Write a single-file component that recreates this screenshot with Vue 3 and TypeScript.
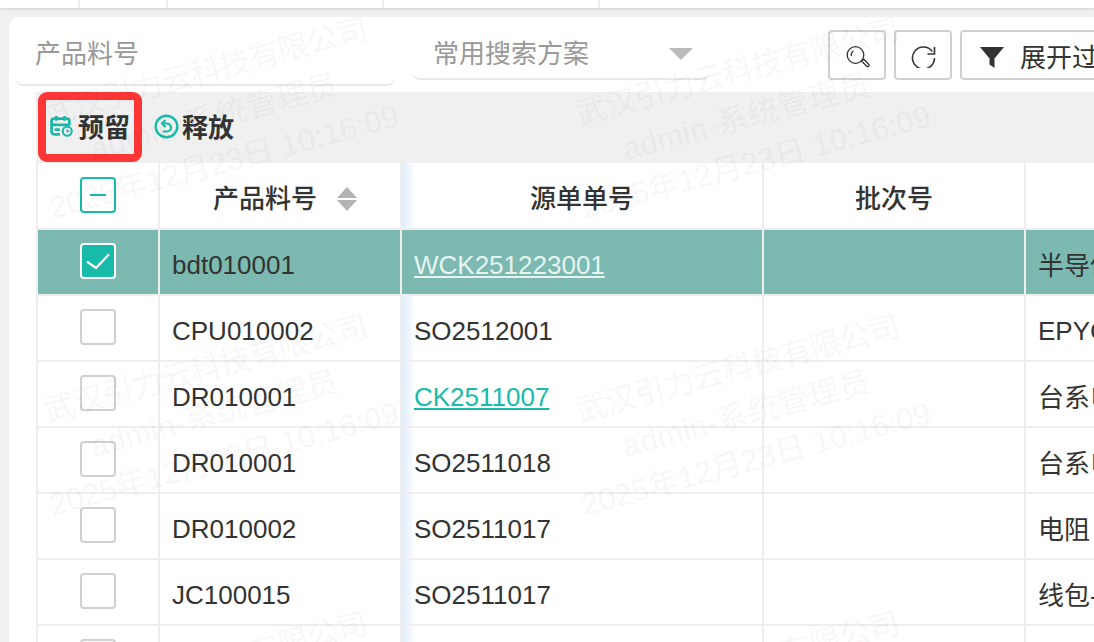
<script setup lang="ts">
interface Row {
  code: string
  source: string
  name: string
  link?: boolean
  selected?: boolean
}

const rows: Row[] = [
  { code: 'bdt010001', source: 'WCK251223001', name: '半导体', link: true, selected: true },
  { code: 'CPU010002', source: 'SO2512001', name: 'EPYC' },
  { code: 'DR010001', source: 'CK2511007', name: '台系电阻', link: true },
  { code: 'DR010001', source: 'SO2511018', name: '台系电阻' },
  { code: 'DR010002', source: 'SO2511017', name: '电阻' },
  { code: 'JC100015', source: 'SO2511017', name: '线包-' },
  { code: '', source: '', name: '' }
]

const tiles = Array.from({ length: 6 }, (_, i) => i)

const isLatin = (text: string): boolean => /^[A-Za-z0-9]+$/.test(text)
</script>

<template>
  <div class="page">
    <div class="top-strip">
      <span class="strip-col w1"></span>
      <span class="strip-col w2"></span>
      <span class="strip-col w3"></span>
      <span class="strip-col w3"></span>
    </div>
    <main class="card">
      <div class="search">
        <div class="field code">产品料号</div>
        <div class="field plan">
          <span>常用搜索方案</span>
          <i class="caret"></i>
        </div>
        <button class="btn square first" aria-label="搜索">
          <svg width="26" height="26" viewBox="0 0 26 26" fill="none" stroke="#333" stroke-width="1.3">
            <circle cx="11.5" cy="13" r="8.300" />
            <path d="M7.500 14a4.500 4.500 0 0 1 2-5" />
            <path d="M17.500 19l2.200 -1.800l5 5a1.400 1.400 0 0 1-2.200 1.800z" />
          </svg>
        </button>
        <button class="btn square" aria-label="刷新">
          <svg width="26" height="26" viewBox="0 0 26 26" fill="none" stroke="#333" stroke-width="1.600">
            <path d="M22.300 9.400A11 11 0 1 0 24.500 16" />
            <path d="M24.500 5v7h-7" />
          </svg>
        </button>
        <button class="btn filter">
          <svg class="funnel" width="24" height="21" viewBox="0 0 24 21" fill="#333"><path d="M0 0H24L14.500 11.500V21L9.500 17.500V11.500Z" /></svg>
          <span>展开过滤</span>
        </button>
      </div>

      <div class="actions">
        <div class="action reserve">
          <svg width="23" height="22" viewBox="0 0 22 21" fill="none" stroke="#18bbaa" stroke-width="2.600">
            <path d="M9.500 18.500H4A2.500 2.500 0 0 1 1.500 16V6A2.500 2.500 0 0 1 4 3.500h12A2.500 2.500 0 0 1 18.500 6v4" />
            <path d="M6 1v4.500M14 1v4.500M1.500 9.500h17M4.500 14h5" />
            <circle cx="16.500" cy="15.500" r="4.300" stroke-width="2" />
            <path d="M16.500 13.500v2.300h2" stroke-width="1.400" />
          </svg>
          <span class="action-label">预留</span>
        </div>
        <div class="action release">
          <svg width="25" height="25" viewBox="0 0 25 25" fill="none" stroke="#18bbaa" stroke-width="2.400">
            <circle cx="12.500" cy="12.500" r="10.800" />
            <path d="M8.500 9.500H13a3.800 3.800 0 0 1 0 8H8.800" stroke-width="2.200" />
            <path d="M11.500 6L8 9.500l3.500 3.500" stroke-width="2.200" />
          </svg>
          <span class="action-label">释放</span>
        </div>
      </div>

      <div class="table">
        <div class="row head">
          <div class="cell c1 center"><span class="check partial"><i></i></span></div>
          <div class="cell c2 center sortable">
            <span class="head-text">产品料号</span>
            <span class="sorter"><i class="up"></i><i class="down"></i></span>
          </div>
          <div class="cell c3 center shaded"><span class="head-text">源单单号</span></div>
          <div class="cell c4 center"><span class="head-text">批次号</span></div>
          <div class="cell c5"></div>
        </div>
        <div v-for="(row, index) in rows" :key="index" class="row" :class="{ selected: row.selected }">
          <div class="cell c1 center">
            <span class="check" :class="{ checked: row.selected }">
              <svg v-if="row.selected" width="32" height="32" viewBox="0 0 32 32" fill="none" stroke="#fff" stroke-width="2.200">
                <path d="M5 16.700L14 23L27 9.300" />
              </svg>
            </span>
          </div>
          <div class="cell c2"><span class="txt">{{ row.code }}</span></div>
          <div class="cell c3 shaded">
            <a v-if="row.link" class="link txt">{{ row.source }}</a>
            <span v-else class="txt">{{ row.source }}</span>
          </div>
          <div class="cell c4"></div>
          <div class="cell c5"><span :class="isLatin(row.name) ? 'txt' : 'txt-cjk'">{{ row.name }}</span></div>
        </div>
      </div>
    </main>

    <div class="highlight"></div>
    <div class="watermarks">
      <div v-for="tile in tiles" :key="tile" class="tile">
        <div class="tile-text">
          <div class="wm-company">武汉引力云科技有限公司</div>
          <div class="wm-user">admin-系统管理员</div>
          <div>2025年12月23日 10:16:09</div>
        </div>
      </div>
    </div>
  </div>
</template>

<style>
html,
body {
  margin: 0;
  overflow: hidden;
}
</style>

<style scoped>
.page {
  position: relative;
  width: 1094px;
  height: 642px;
  overflow: hidden;
  background: #f0f0f0;
  color: #333;
  font-family: "Liberation Sans", "Noto Sans CJK SC", sans-serif;
  font-size: 26px;
}
.top-strip {
  display: flex;
  height: 8px;
  background: #fff;
  box-shadow: 0 1px 3px rgba(0, 0, 0, 0.14);
}
.strip-col {
  flex: none;
  box-sizing: border-box;
  height: 100%;
  border-right: 2px solid #eee;
}
.w1 { width: 80px; }
.w2 { width: 88px; }
.w3 { width: 216px; }
.card {
  margin: 9px 0 0 9px;
  height: 640px;
  background: #fff;
  border-radius: 10px 0 0 0;
  overflow: hidden;
}
.search {
  display: flex;
  align-items: flex-start;
  height: 75px;
  box-sizing: border-box;
  padding: 13px 0 0 6px;
}
.field {
  flex: none;
  box-sizing: border-box;
  border-bottom: 2px solid #e8e8e8;
  border-radius: 0 0 8px 8px;
  color: #999;
  line-height: 48px;
  white-space: nowrap;
}
.code {
  width: 380px;
  height: 56px;
  padding-left: 20px;
}
.plan {
  display: flex;
  align-items: center;
  width: 298px;
  height: 50px;
  margin-left: 17px;
  padding: 0 0 0 21px;
}
.caret {
  flex: none;
  width: 0;
  height: 0;
  margin: 0 0 0 80px;
  border: 12px solid transparent;
  border-top: 12px solid #bbb;
  border-bottom: 0;
}
.btn {
  display: flex;
  flex: none;
  align-items: center;
  justify-content: center;
  height: 50px;
  margin: 0 0 0 8px;
  padding: 0;
  box-sizing: border-box;
  background: #fff;
  border: 2px solid #d0d0d0;
  border-radius: 4px;
  color: #333;
  font: inherit;
  white-space: nowrap;
}
.square {
  width: 58px;
}
.first {
  margin-left: 118px;
}
.filter {
  width: 190px;
  justify-content: flex-start;
  padding-left: 18px;
  gap: 16px;
}
.funnel {
  margin-top: 4px;
}
.actions {
  display: flex;
  align-items: center;
  height: 71px;
  margin-left: 27px;
  padding: 0 0 3px 14px;
  background: #f0f0f0;
  font-weight: 700;
  box-sizing: border-box;
}
.action {
  display: flex;
  flex: none;
  align-items: center;
  white-space: nowrap;
}
.action-label {
  margin-top: -1px;
}
.reserve {
  width: 104px;
  gap: 5px;
}
.release {
  gap: 3px;
}
.table {
  width: 1100px;
  margin-left: 27px;
  background: #fff;
}
.row {
  display: flex;
  height: 66px;
  box-sizing: border-box;
  border-bottom: 2px solid #eee;
  white-space: nowrap;
}
.head {
  height: 67px;
  font-weight: 500;
}
.head-text {
  padding-top: 1px;
}
.cell {
  display: flex;
  flex: none;
  align-items: center;
  box-sizing: border-box;
  height: 100%;
  padding-left: 12px;
  border-right: 2px solid #eee;
  overflow: hidden;
}
.txt {
  padding-top: 6px;
}
.txt-cjk {
  padding-top: 2px;
}
.center {
  justify-content: center;
  padding-left: 0;
}
.c1 { width: 124px; border-left: 2px solid #eee; }
.c2 { width: 242px; }
.c3 { width: 362px; }
.c4 { width: 262px; }
.c5 { width: 110px; border-right: 0; }
.sortable {
  padding-left: 10px;
}
.shaded {
  background: linear-gradient(to right, #e0ecf9, #fff 13px);
}
.selected {
  background: #7cb9b0;
}
.selected .shaded {
  background: none;
}
.check {
  display: flex;
  align-items: center;
  justify-content: center;
  width: 36px;
  height: 36px;
  margin-bottom: 2px;
  box-sizing: border-box;
  background: #fff;
  border: 2px solid #d0d0d0;
  border-radius: 4px;
}
.partial {
  border-color: #18bbaa;
}
.partial i {
  width: 16px;
  height: 2px;
  background: #18bbaa;
}
.checked {
  background: #18bbaa;
  border-color: #fff;
}
.sorter {
  display: flex;
  flex-direction: column;
  gap: 2px;
  margin: 6px 0 0 20px;
}
.sorter i {
  width: 0;
  height: 0;
  border-left: 10px solid transparent;
  border-right: 10px solid transparent;
}
.sorter .up { border-bottom: 11px solid #b3b3b3; }
.sorter .down { border-top: 11px solid #b3b3b3; }
.link {
  color: #18bbaa;
  text-decoration: underline;
}
.selected .link {
  color: #e6f4f1;
}
.highlight {
  position: absolute;
  left: 38px;
  top: 92px;
  width: 104px;
  height: 70px;
  box-sizing: border-box;
  border: 8px solid #ff3636;
  border-radius: 9px;
  pointer-events: none;
}
.watermarks {
  position: absolute;
  left: -54px;
  top: -31px;
  display: grid;
  grid-template-columns: repeat(2, 532px);
  grid-auto-rows: 297px;
  pointer-events: none;
}
.tile {
  display: flex;
  align-items: center;
  justify-content: center;
}
.tile-text {
  transform: rotate(-15deg);
  text-align: center;
  color: rgba(0, 0, 0, 0.05);
  font-size: 31px;
  line-height: 46px;
  white-space: nowrap;
}
.wm-company {
  padding-left: 11px;
  letter-spacing: -0.7px;
}
.wm-user {
  padding-left: 5px;
  letter-spacing: 0.5px;
}
</style>
